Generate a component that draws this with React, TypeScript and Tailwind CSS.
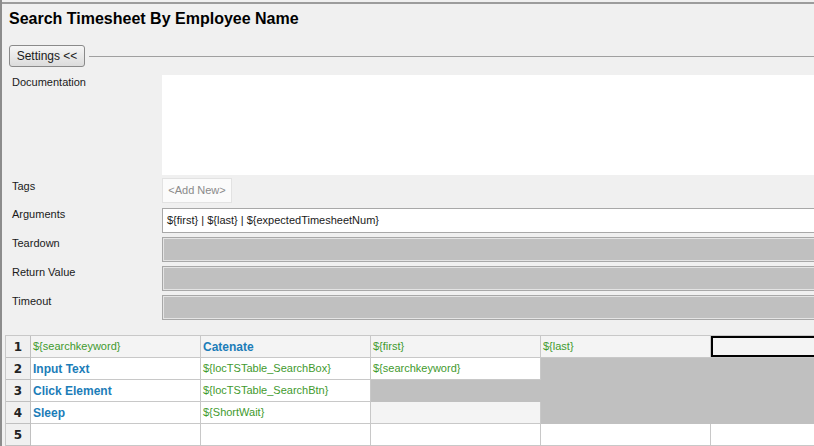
import React from "react";

type Cell = { text?: string; kind?: "kw" | "var"; bg?: string; selected?: boolean };

const ui = { fontFamily: '"Liberation Sans", Arial, sans-serif' };

const rows: Cell[][] = [
  [
    { text: "${searchkeyword}", kind: "var", bg: "light" },
    { text: "Catenate", kind: "kw", bg: "light" },
    { text: "${first}", kind: "var", bg: "light" },
    { text: "${last}", kind: "var", bg: "light" },
    { bg: "light", selected: true },
  ],
  [
    { text: "Input Text", kind: "kw" },
    { text: "${locTSTable_SearchBox}", kind: "var" },
    { text: "${searchkeyword}", kind: "var" },
    { bg: "gray" },
    { bg: "gray" },
  ],
  [
    { text: "Click Element", kind: "kw" },
    { text: "${locTSTable_SearchBtn}", kind: "var" },
    { bg: "gray" },
    { bg: "gray" },
    { bg: "gray" },
  ],
  [
    { text: "Sleep", kind: "kw" },
    { text: "${ShortWait}", kind: "var" },
    { bg: "light" },
    { bg: "gray" },
    { bg: "gray" },
  ],
  [{}, {}, {}, {}, {}],
];

const FieldLabel = ({ children, top = 0 }: { children: React.ReactNode; top?: number }) => (
  <div className="w-[160px] shrink-0 pl-[10px] text-[11px] leading-[13px] text-[#1a1a1a]" style={{ paddingTop: top }}>
    {children}
  </div>
);

const GridCell = ({ cell }: { cell: Cell }) => {
  let cls = "h-[22px] border-r border-b flex items-center pl-[2px] overflow-hidden whitespace-nowrap ";
  if (cell.bg === "gray") cls += "bg-[#c0c0c0] border-[#c0c0c0]";
  else if (cell.bg === "light") cls += "bg-[#f4f4f4] border-[#c8c8c8]";
  else cls += "bg-white border-[#c8c8c8]";
  return (
    <div className={cls + " relative"}>
      {cell.selected && <div className="absolute inset-0 border-2 border-black" />}
      {cell.kind === "kw" && <span className="text-[12px] font-bold text-[#1c7db8]">{cell.text}</span>}
      {cell.kind === "var" && <span className="text-[11px] text-[#3f9a2e]">{cell.text}</span>}
    </div>
  );
};

export default function App() {
  return (
    <div className="w-[814px] h-[446px] overflow-hidden bg-[#f0f0f0] border-l-2 border-[#8c8c8c]" style={ui}>
      <div className="mt-[2px] border-t-2 border-[#9c9c9c] w-[1000px]">
        <div className="pt-[6px] pl-[7px] text-[16px] leading-[18px] font-bold text-black">
          Search Timesheet By Employee Name
        </div>

        <div className="mt-[17px] flex items-center">
          <button className="ml-[7px] h-[22px] w-[76px] rounded-[3px] border border-[#8a8a8a] bg-gradient-to-b from-[#f6f6f6] to-[#dcdcdc] text-[12px] text-[#1a1a1a]">
            {"Settings <<"}
          </button>
          <div className="ml-[4px] flex-1 border-t border-[#a0a0a0]" />
        </div>

        <div className="mt-[8px] flex">
          <FieldLabel top={1}>Documentation</FieldLabel>
          <div className="flex-1 h-[100px] bg-white" />
        </div>

        <div className="mt-[3px] flex">
          <FieldLabel top={2}>Tags</FieldLabel>
          <div className="h-[25px] w-[70px] bg-[#fbfbfb] border border-[#e2e2e2] flex items-center justify-center text-[11px] text-[#8a8a8a]">
            {"<Add New>"}
          </div>
        </div>

        <div className="mt-[5px] flex">
          <FieldLabel>Arguments</FieldLabel>
          <div className="flex-1 h-[25px] bg-white border border-[#a8a8a8] flex items-center pl-[4px] text-[11px] text-[#1a1a1a]">
            {"${first} | ${last} | ${expectedTimesheetNum}"}
          </div>
        </div>

        {["Teardown", "Return Value", "Timeout"].map((label) => (
          <div key={label} className="mt-[4px] flex">
            <FieldLabel>{label}</FieldLabel>
            <div className="flex-1 h-[25px] bg-[#c0c0c0] border border-[#a8a8a8] shadow-[inset_0_0_0_1px_#e4e4e4]" />
          </div>
        ))}

        <div className="mt-[15px] ml-[3px] border-t border-l border-[#c8c8c8] grid grid-cols-[25px_170px_170px_170px_170px_1fr]">
          {rows.map((row, i) => (
            <React.Fragment key={i}>
              <div
                className="h-[22px] border-r border-b border-[#c0c0c0] bg-[#f0f0f0] flex items-center justify-center text-[12px] font-bold text-[#222]"
                style={{ fontFamily: '"DejaVu Sans", Verdana, sans-serif' }}
              >
                {i + 1}
              </div>
              {row.map((cell, j) => (
                <GridCell key={j} cell={cell} />
              ))}
            </React.Fragment>
          ))}
        </div>
      </div>
    </div>
  );
}
